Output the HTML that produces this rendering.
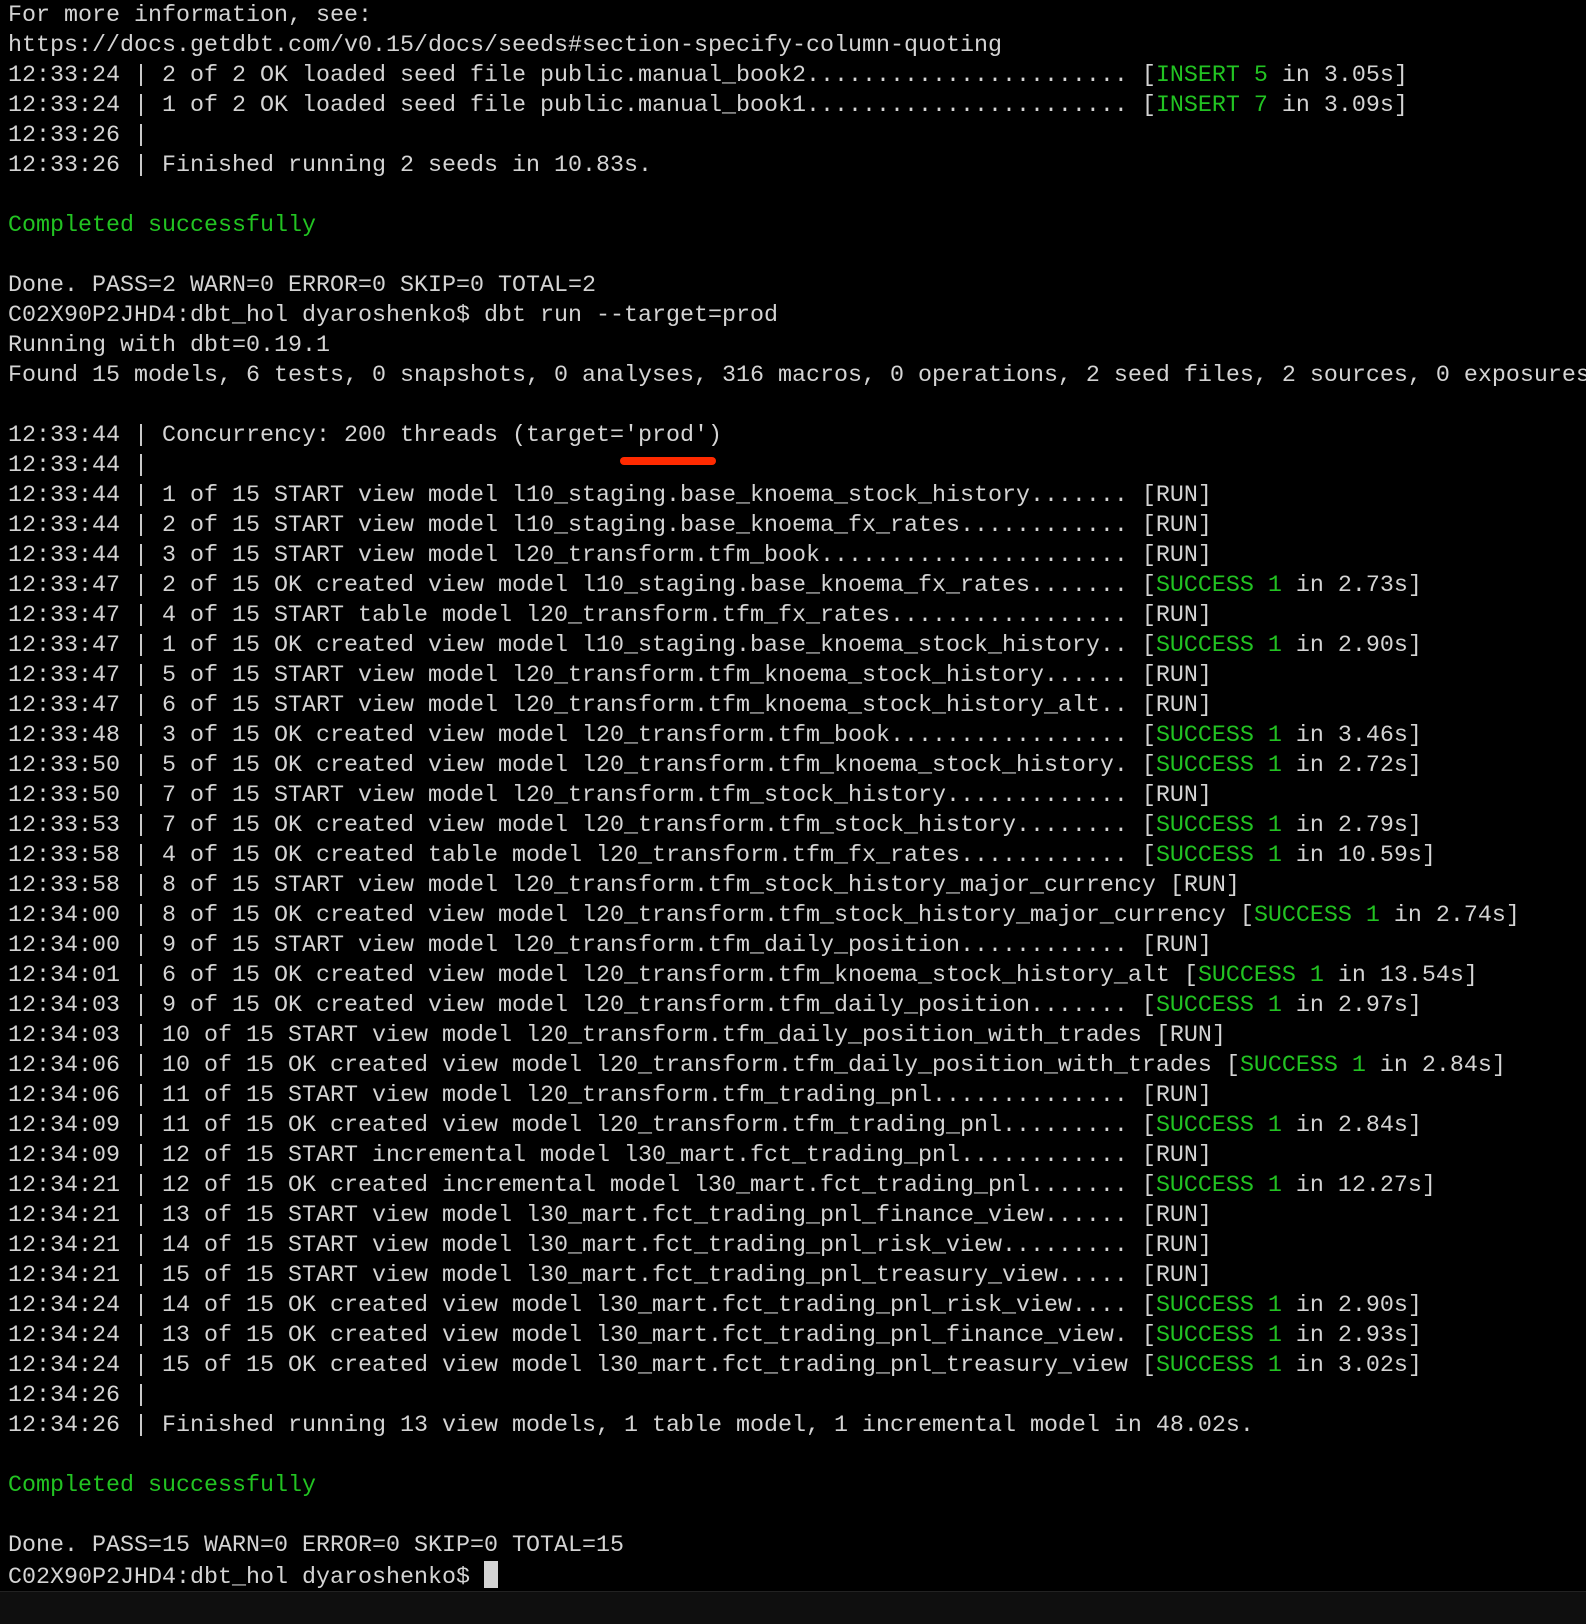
<!DOCTYPE html>
<html><head><meta charset="utf-8"><style>
html,body{margin:0;padding:0;background:#000;width:1586px;height:1624px;overflow:hidden;position:relative}
pre{margin:0;position:absolute;left:8px;top:1px;font-family:"Liberation Mono",monospace;font-size:23.33px;line-height:30px;color:#d4d4d4;white-space:pre}
.g{color:#22c322}
.cur{background:#d4d4d4;display:inline-block;width:14px;height:27px;vertical-align:-5px}
.red{position:absolute;left:620px;top:457px;width:96px;height:8px;border-radius:4px;background:#ff2a00}
.bar{position:absolute;left:0;top:1591px;width:1586px;height:33px;background:#0f0f0f;border-top:1px solid #222}
</style></head><body>
<pre>For more information, see:
https://docs.getdbt.com/v0.15/docs/seeds#section-specify-column-quoting
12:33:24 | 2 of 2 OK loaded seed file public.manual_book2....................... [<span class="g">INSERT 5</span> in 3.05s]
12:33:24 | 1 of 2 OK loaded seed file public.manual_book1....................... [<span class="g">INSERT 7</span> in 3.09s]
12:33:26 |
12:33:26 | Finished running 2 seeds in 10.83s.

<span class="g">Completed successfully</span>

Done. PASS=2 WARN=0 ERROR=0 SKIP=0 TOTAL=2
C02X90P2JHD4:dbt_hol dyaroshenko$ dbt run --target=prod
Running with dbt=0.19.1
Found 15 models, 6 tests, 0 snapshots, 0 analyses, 316 macros, 0 operations, 2 seed files, 2 sources, 0 exposures

12:33:44 | Concurrency: 200 threads (target='prod')
12:33:44 |
12:33:44 | 1 of 15 START view model l10_staging.base_knoema_stock_history....... [RUN]
12:33:44 | 2 of 15 START view model l10_staging.base_knoema_fx_rates............ [RUN]
12:33:44 | 3 of 15 START view model l20_transform.tfm_book...................... [RUN]
12:33:47 | 2 of 15 OK created view model l10_staging.base_knoema_fx_rates....... [<span class="g">SUCCESS 1</span> in 2.73s]
12:33:47 | 4 of 15 START table model l20_transform.tfm_fx_rates................. [RUN]
12:33:47 | 1 of 15 OK created view model l10_staging.base_knoema_stock_history.. [<span class="g">SUCCESS 1</span> in 2.90s]
12:33:47 | 5 of 15 START view model l20_transform.tfm_knoema_stock_history...... [RUN]
12:33:47 | 6 of 15 START view model l20_transform.tfm_knoema_stock_history_alt.. [RUN]
12:33:48 | 3 of 15 OK created view model l20_transform.tfm_book................. [<span class="g">SUCCESS 1</span> in 3.46s]
12:33:50 | 5 of 15 OK created view model l20_transform.tfm_knoema_stock_history. [<span class="g">SUCCESS 1</span> in 2.72s]
12:33:50 | 7 of 15 START view model l20_transform.tfm_stock_history............. [RUN]
12:33:53 | 7 of 15 OK created view model l20_transform.tfm_stock_history........ [<span class="g">SUCCESS 1</span> in 2.79s]
12:33:58 | 4 of 15 OK created table model l20_transform.tfm_fx_rates............ [<span class="g">SUCCESS 1</span> in 10.59s]
12:33:58 | 8 of 15 START view model l20_transform.tfm_stock_history_major_currency [RUN]
12:34:00 | 8 of 15 OK created view model l20_transform.tfm_stock_history_major_currency [<span class="g">SUCCESS 1</span> in 2.74s]
12:34:00 | 9 of 15 START view model l20_transform.tfm_daily_position............ [RUN]
12:34:01 | 6 of 15 OK created view model l20_transform.tfm_knoema_stock_history_alt [<span class="g">SUCCESS 1</span> in 13.54s]
12:34:03 | 9 of 15 OK created view model l20_transform.tfm_daily_position....... [<span class="g">SUCCESS 1</span> in 2.97s]
12:34:03 | 10 of 15 START view model l20_transform.tfm_daily_position_with_trades [RUN]
12:34:06 | 10 of 15 OK created view model l20_transform.tfm_daily_position_with_trades [<span class="g">SUCCESS 1</span> in 2.84s]
12:34:06 | 11 of 15 START view model l20_transform.tfm_trading_pnl.............. [RUN]
12:34:09 | 11 of 15 OK created view model l20_transform.tfm_trading_pnl......... [<span class="g">SUCCESS 1</span> in 2.84s]
12:34:09 | 12 of 15 START incremental model l30_mart.fct_trading_pnl............ [RUN]
12:34:21 | 12 of 15 OK created incremental model l30_mart.fct_trading_pnl....... [<span class="g">SUCCESS 1</span> in 12.27s]
12:34:21 | 13 of 15 START view model l30_mart.fct_trading_pnl_finance_view...... [RUN]
12:34:21 | 14 of 15 START view model l30_mart.fct_trading_pnl_risk_view......... [RUN]
12:34:21 | 15 of 15 START view model l30_mart.fct_trading_pnl_treasury_view..... [RUN]
12:34:24 | 14 of 15 OK created view model l30_mart.fct_trading_pnl_risk_view.... [<span class="g">SUCCESS 1</span> in 2.90s]
12:34:24 | 13 of 15 OK created view model l30_mart.fct_trading_pnl_finance_view. [<span class="g">SUCCESS 1</span> in 2.93s]
12:34:24 | 15 of 15 OK created view model l30_mart.fct_trading_pnl_treasury_view [<span class="g">SUCCESS 1</span> in 3.02s]
12:34:26 |
12:34:26 | Finished running 13 view models, 1 table model, 1 incremental model in 48.02s.

<span class="g">Completed successfully</span>

Done. PASS=15 WARN=0 ERROR=0 SKIP=0 TOTAL=15
C02X90P2JHD4:dbt_hol dyaroshenko$ <span class="cur"></span></pre>
<div class="red"></div>
<div class="bar"></div>
</body></html>
